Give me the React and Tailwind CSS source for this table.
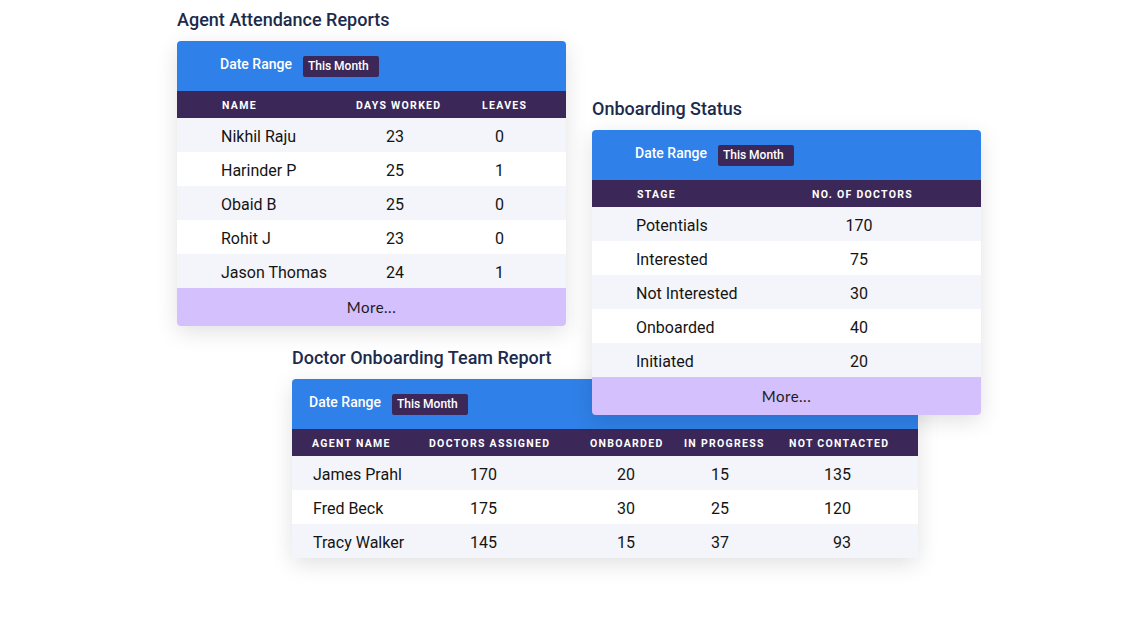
import React from "react";

const ROW_BG = ["bg-[#f4f5fa]", "bg-white"];

function Title({ children }) {
  return (
    <div className="h-6 leading-6 text-[18px] font-medium text-[#1c2a4b] mb-[9px] whitespace-nowrap">
      {children}
    </div>
  );
}

function DateBar({ pl }) {
  return (
    <div className={`h-[50px] bg-[#2f80e8] flex items-center ${pl}`}>
      <span className="text-white text-[14px] font-medium pb-[3px]">Date Range</span>
      <span className="ml-[11px] w-[76px] h-[21px] rounded-[2px] bg-[#3b2859] text-white text-[12px] font-medium flex items-center pl-[5px]">
        This Month
      </span>
    </div>
  );
}

function HeadRow({ children, pl }) {
  return (
    <div className={`h-[27px] bg-[#3b2859] flex items-center pt-[2px] text-white text-[10.5px] font-bold tracking-[1.3px] whitespace-nowrap ${pl}`}>
      {children}
    </div>
  );
}

function More() {
  return (
    <div className="h-[38px] bg-[#d4c0fd] flex items-center justify-center text-[15px] text-[#1b1b1b] font-['Lato',sans-serif] tracking-[0.5px]">
      More...
    </div>
  );
}

const attendance = [
  ["Nikhil Raju", "23", "0"],
  ["Harinder P", "25", "1"],
  ["Obaid B", "25", "0"],
  ["Rohit J", "23", "0"],
  ["Jason Thomas", "24", "1"],
];

const onboarding = [
  ["Potentials", "170"],
  ["Interested", "75"],
  ["Not Interested", "30"],
  ["Onboarded", "40"],
  ["Initiated", "20"],
];

const team = [
  ["James Prahl", "170", "20", "15", "135"],
  ["Fred Beck", "175", "30", "25", "120"],
  ["Tracy Walker", "145", "15", "37", "93"],
];

const ROW = "h-[34px] flex items-center pt-[4px] text-[16px] text-[#141414]";

export default function App() {
  return (
    <div className="relative w-[1121px] h-[623px] bg-white overflow-hidden font-['Roboto',sans-serif]">
      {/* Agent Attendance Reports */}
      <div className="absolute left-[177px] top-[8px] w-[389px]">
        <Title>Agent Attendance Reports</Title>
        <div className="rounded-[4px] overflow-hidden shadow-[0_6px_22px_rgba(0,0,0,0.12)]">
          <DateBar pl="pl-[43px]" />
          <HeadRow pl="pl-[45px]">
            <span className="w-[134px]">NAME</span>
            <span className="w-[126px]">DAYS WORKED</span>
            <span>LEAVES</span>
          </HeadRow>
          {attendance.map((r, i) => (
            <div key={r[0]} className={`${ROW} pl-[44px] ${ROW_BG[i % 2]}`}>
              <span className="w-[165px]">{r[0]}</span>
              <span className="w-[109px]">{r[1]}</span>
              <span>{r[2]}</span>
            </div>
          ))}
          <More />
        </div>
      </div>

      {/* Doctor Onboarding Team Report */}
      <div className="absolute left-[292px] top-[346px] w-[626px]">
        <Title>Doctor Onboarding Team Report</Title>
        <div className="rounded-[4px] overflow-hidden shadow-[0_6px_22px_rgba(0,0,0,0.12)]">
          <DateBar pl="pl-[17px]" />
          <HeadRow pl="pl-[20px]">
            <span className="w-[117px]">AGENT NAME</span>
            <span className="w-[161px]">DOCTORS ASSIGNED</span>
            <span className="w-[94px]">ONBOARDED</span>
            <span className="w-[105px]">IN PROGRESS</span>
            <span>NOT CONTACTED</span>
          </HeadRow>
          {team.map((r, i) => (
            <div key={r[0]} className={`${ROW} pl-[21px] ${ROW_BG[i % 2]}`}>
              <span className="w-[157px]">{r[0]}</span>
              <span className="w-[147px]">{r[1]}</span>
              <span className="w-[94px]">{r[2]}</span>
              <span className="w-[60px]">{r[3]}</span>
              <span className="w-[80px] text-right">{r[4]}</span>
            </div>
          ))}
        </div>
      </div>

      {/* Onboarding Status */}
      <div className="absolute left-[592px] top-[97px] w-[389px]">
        <Title>Onboarding Status</Title>
        <div className="rounded-[4px] overflow-hidden shadow-[0_6px_22px_rgba(0,0,0,0.12)]">
          <DateBar pl="pl-[43px]" />
          <HeadRow pl="pl-[45px]">
            <span className="w-[175px]">STAGE</span>
            <span>NO. OF DOCTORS</span>
          </HeadRow>
          {onboarding.map((r, i) => (
            <div key={r[0]} className={`${ROW} pl-[44px] ${ROW_BG[i % 2]}`}>
              <span className="w-[193px]">{r[0]}</span>
              <span className="w-[60px] text-center">{r[1]}</span>
            </div>
          ))}
          <More />
        </div>
      </div>
    </div>
  );
}
